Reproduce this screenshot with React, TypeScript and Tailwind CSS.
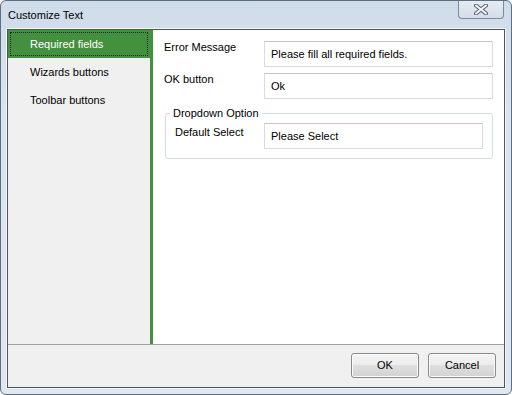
import { useState } from 'react';

const font = { fontFamily: '"Liberation Sans", Arial, sans-serif' };

const menuItems = ['Required fields', 'Wizards buttons', 'Toolbar buttons'];

function TextBox({ value, width }: { value: string; width: string }) {
  return (
    <div
      className={`${width} h-[26px] flex items-center pl-[6px] bg-white border border-[#d9dbde] border-t-[#c3c6cb] text-[11px] leading-[13px] text-black`}
    >
      {value}
    </div>
  );
}

function DlgButton({ label }: { label: string }) {
  return (
    <button className="w-[68px] h-[25px] rounded-[3px] border border-[#8a8a8a] bg-[linear-gradient(to_bottom,#f4f4f4_0%,#ececec_50%,#dfdfdf_50%,#d2d2d2_100%)] shadow-[inset_0_0_0_1px_#fbfbfb] text-[11px] leading-[13px] text-black">
      {label}
    </button>
  );
}

export default function App() {
  const [selected, setSelected] = useState(0);

  return (
    <div className="w-[512px] h-[395px] bg-white" style={font}>
      <div className="w-full h-full flex flex-col rounded-[6px] border border-[#5e6e80] bg-[linear-gradient(to_bottom,#cfdce9_0%,#dae4ee_30%,#dfe7ef_100%)]">
        {/* Title bar */}
        <div className="h-[28px] flex items-start pl-[7px] pr-[7px]">
          <span className="mt-[8px] text-[11px] leading-[13px] text-black">Customize Text</span>
          <div className="ml-auto w-[46px] h-[18px] rounded-b-[4px] border border-t-0 border-[#7d8a99] bg-[linear-gradient(to_bottom,#e4ebf2,#d4dee9)] flex items-center justify-center">
            <svg width="14" height="11" viewBox="0 0 14 11">
              <path d="M2 1.5 L12 9.5 M12 1.5 L2 9.5" stroke="#5b6574" strokeWidth="4" strokeLinecap="round" />
              <path d="M2 1.5 L12 9.5 M12 1.5 L2 9.5" stroke="#f4f6f8" strokeWidth="2" strokeLinecap="round" />
            </svg>
          </div>
        </div>

        {/* Client area */}
        <div className="mx-[6px] h-[359px] flex flex-col border border-[#4d5662] bg-[#f0f0f0] shadow-[0_0_0_1px_#f3f6f9]">
          <div className="h-[314px] flex">
            {/* Left list */}
            <div className="w-[142px] bg-[#f0f0f0] flex flex-col">
              {menuItems.map((item, i) =>
                i === selected ? (
                  <div key={item} className="h-[28px] bg-[#43903e] p-[2px]" onClick={() => setSelected(i)}>
                    <div className="h-[24px] border border-dotted border-[#1c2a1c] flex items-center pl-[19px] text-[11px] leading-[13px] text-white">
                      {item}
                    </div>
                  </div>
                ) : (
                  <div
                    key={item}
                    className="h-[28px] flex items-center pl-[22px] text-[11px] leading-[13px] text-black"
                    onClick={() => setSelected(i)}
                  >
                    {item}
                  </div>
                )
              )}
            </div>
            <div className="w-[3px] bg-[#43903e]" />

            {/* Right panel */}
            <div className="flex-1 bg-white pt-[11px] pl-[11px] flex flex-col">
              <div className="flex">
                <div className="w-[100px] text-[11px] leading-[13px] text-black">Error Message</div>
                <TextBox value="Please fill all required fields." width="w-[229px]" />
              </div>
              <div className="flex mt-[6px]">
                <div className="w-[100px] text-[11px] leading-[13px] text-black">OK button</div>
                <TextBox value="Ok" width="w-[229px]" />
              </div>
              <fieldset className="ml-[1px] mt-[8px] w-[328px] border border-[#d5dde4] rounded-[3px] pl-[9px] pb-[9px]">
                <legend className="-ml-[5px] px-[3px] text-[11px] leading-[13px] text-black">Dropdown Option</legend>
                <div className="flex mt-[3px]">
                  <div className="w-[89px] pt-[3px] text-[11px] leading-[13px] text-black">Default Select</div>
                  <TextBox value="Please Select" width="w-[219px]" />
                </div>
              </fieldset>
            </div>
          </div>

          <div className="h-[1px] bg-[#a0a0a0]" />

          {/* Button bar */}
          <div className="flex-1 flex justify-end items-start gap-[9px] pt-[8px] pr-[8px] bg-[#f0f0f0]">
            <DlgButton label="OK" />
            <DlgButton label="Cancel" />
          </div>
        </div>
      </div>
    </div>
  );
}
